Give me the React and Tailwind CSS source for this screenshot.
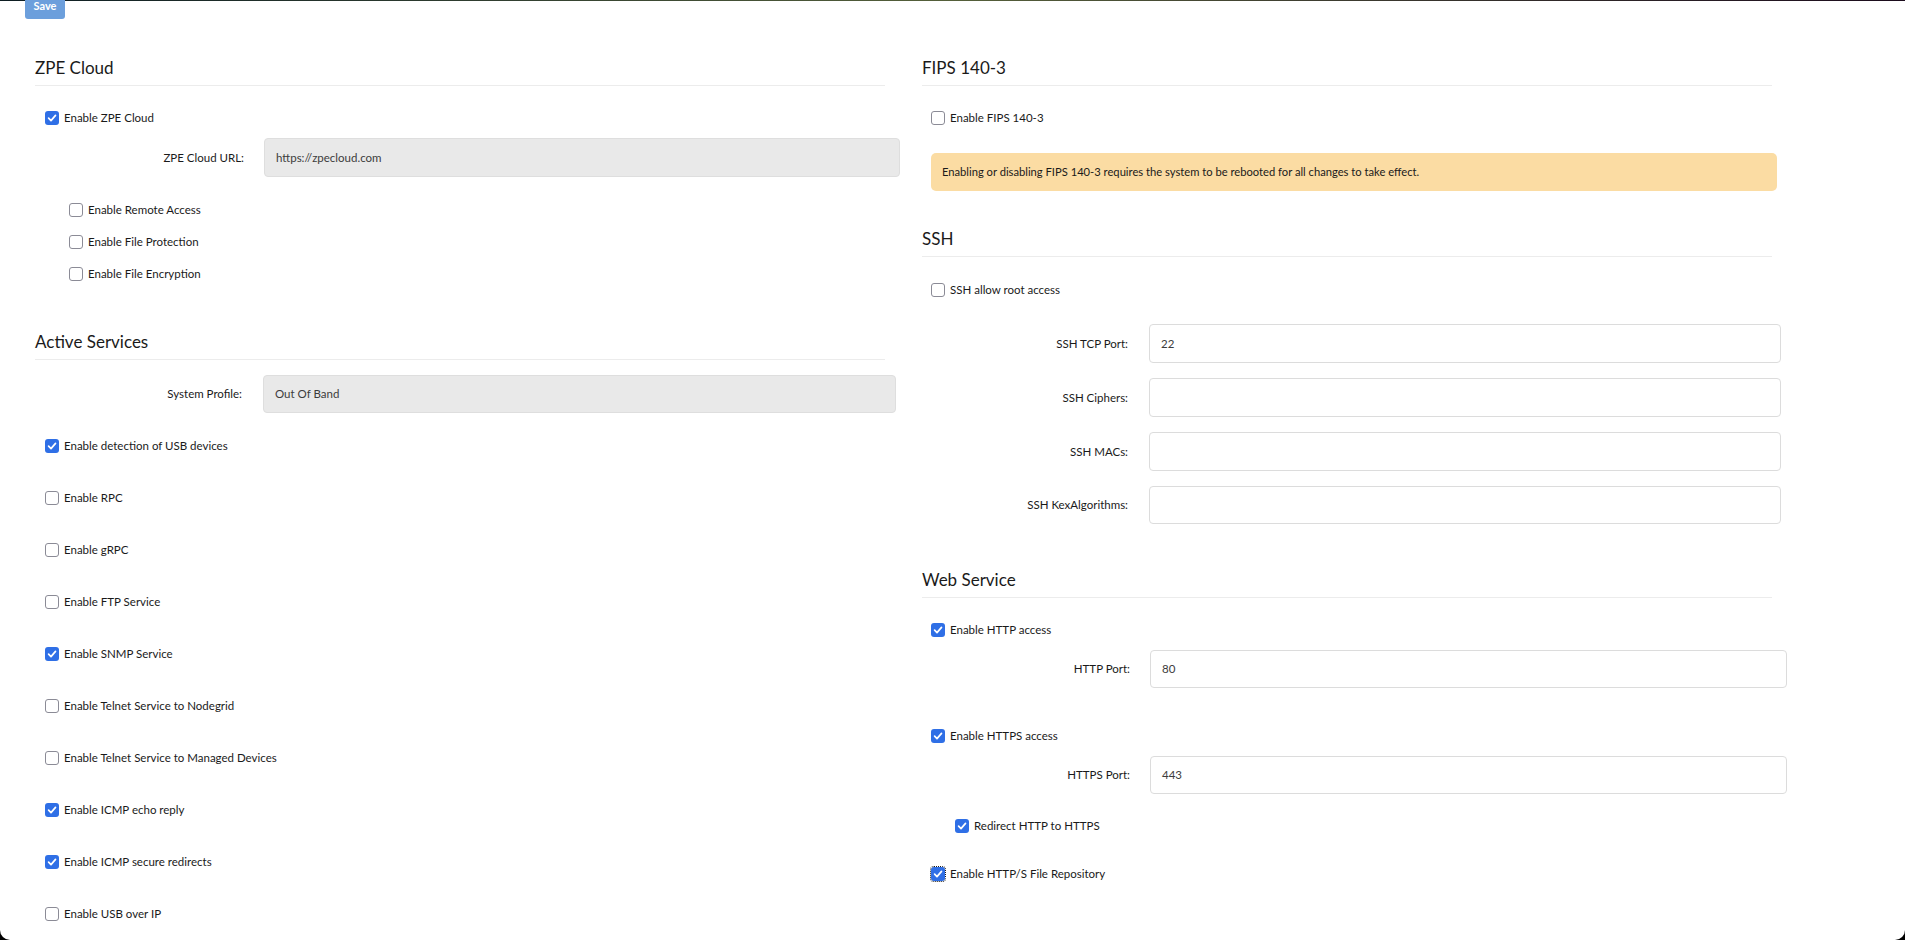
import React from "react";

const FONT = { fontFamily: "Lato, 'Noto Sans', Arial, sans-serif" };

function Check({ checked }) {
  if (checked) {
    return (
      <span className="w-[14px] h-[14px] rounded-[3px] bg-[#2f6fe6] flex items-center justify-center shrink-0">
        <svg width="10" height="10" viewBox="0 0 10 10">
          <path d="M1.6 5.2 L4 7.6 L8.5 2.4" fill="none" stroke="white" strokeWidth="1.7" strokeLinecap="round" strokeLinejoin="round" />
        </svg>
      </span>
    );
  }
  return <span className="w-[14px] h-[14px] rounded-[3px] border-[1.5px] border-[#8b8b96] bg-white shrink-0" />;
}

function CheckRow({ checked, label, className = "" }) {
  return (
    <div className={"h-[20px] flex items-center gap-[5px] " + className}>
      <Check checked={checked} />
      <span className="text-[11.5px] text-[#1a1a1a]">{label}</span>
    </div>
  );
}

function Heading({ children, className = "" }) {
  return (
    <div className={"h-[30px] border-b border-[#ececec] " + className}>
      <div className="h-[24px] leading-[24px] text-[17px] text-[#1a1a1a]">{children}</div>
    </div>
  );
}

function Field({ label, value, disabled, labelW, gap, inputW, h = 39, className = "" }) {
  return (
    <div className={"flex items-center " + className}>
      <div className="text-right text-[11.5px] text-[#1a1a1a] shrink-0" style={{ width: labelW }}>{label}</div>
      <div
        className={
          "rounded-[4px] border flex items-center pl-[11px] text-[11.5px] text-[#3c3c3c] shrink-0 " +
          (disabled ? "bg-[#e9e9e9] border-[#dedede]" : "bg-white border-[#dcdcdc]")
        }
        style={{ marginLeft: gap, width: inputW, height: h }}
      >
        {value}
      </div>
    </div>
  );
}

export default function App() {
  const services = [
    [true, "Enable detection of USB devices"],
    [false, "Enable RPC"],
    [false, "Enable gRPC"],
    [false, "Enable FTP Service"],
    [true, "Enable SNMP Service"],
    [false, "Enable Telnet Service to Nodegrid"],
    [false, "Enable Telnet Service to Managed Devices"],
    [true, "Enable ICMP echo reply"],
    [true, "Enable ICMP secure redirects"],
    [false, "Enable USB over IP"],
  ];
  return (
    <div className="w-full h-[940px] bg-black overflow-hidden" style={FONT}>
      <div className="w-full h-[940px] bg-white rounded-b-[10px] overflow-hidden">
        <div className="h-[1px] w-full bg-linear-to-r from-[#0d1d22] via-[#55603a] to-[#1b0b1c]" />
        <div className="pl-[25px] -mt-[9px]">
          <div className="w-[40px] h-[27px] rounded-[3px] bg-[#6c9fdc] text-white text-[11px] font-bold flex items-start justify-center pt-[8px] leading-[11px]">
            Save
          </div>
        </div>
        <div className="flex pl-[35px] gap-[37px] mt-[37px]">
          {/* Left column */}
          <div className="w-[850px] flex flex-col">
            <Heading>ZPE Cloud</Heading>
            <CheckRow checked label="Enable ZPE Cloud" className="ml-[10px] mt-[22px]" />
            <Field label="ZPE Cloud URL:" value="https://zpecloud.com" disabled labelW={209} gap={20} inputW={636} className="mt-[10px]" />
            <div className="flex flex-col gap-[12px] mt-[23px] ml-[34px]">
              <CheckRow label="Enable Remote Access" />
              <CheckRow label="Enable File Protection" />
              <CheckRow label="Enable File Encryption" />
            </div>
            <Heading className="mt-[46px]">Active Services</Heading>
            <Field label="System Profile:" value="Out Of Band" disabled labelW={207} gap={21} inputW={633} h={38} className="mt-[15px]" />
            <div className="flex flex-col gap-[32px] mt-[23px] ml-[10px]">
              {services.map(([c, l]) => (
                <CheckRow key={l} checked={c} label={l} />
              ))}
            </div>
          </div>
          {/* Right column */}
          <div className="w-[850px] flex flex-col">
            <Heading>FIPS 140-3</Heading>
            <CheckRow label="Enable FIPS 140-3" className="ml-[9px] mt-[22px]" />
            <div className="ml-[9px] mt-[25px] w-[846px] h-[38px] rounded-[5px] bg-[#fbdca3] flex items-center pl-[11px] text-[11.2px] text-[#1a1a1a]">
              Enabling or disabling FIPS 140-3 requires the system to be rebooted for all changes to take effect.
            </div>
            <Heading className="mt-[36px]">SSH</Heading>
            <CheckRow label="SSH allow root access" className="ml-[9px] mt-[23px]" />
            <div className="flex flex-col gap-[15px] mt-[24px]">
              <Field label="SSH TCP Port:" value="22" labelW={206} gap={21} inputW={632} />
              <Field label="SSH Ciphers:" value="" labelW={206} gap={21} inputW={632} />
              <Field label="SSH MACs:" value="" labelW={206} gap={21} inputW={632} />
              <Field label="SSH KexAlgorithms:" value="" labelW={206} gap={21} inputW={632} h={38} />
            </div>
            <Heading className="mt-[44px]">Web Service</Heading>
            <CheckRow checked label="Enable HTTP access" className="ml-[9px] mt-[22px]" />
            <Field label="HTTP Port:" value="80" labelW={208} gap={20} inputW={637} h={38} className="mt-[10px]" />
            <CheckRow checked label="Enable HTTPS access" className="ml-[9px] mt-[38px]" />
            <Field label="HTTPS Port:" value="443" labelW={208} gap={20} inputW={637} h={38} className="mt-[10px]" />
            <CheckRow checked label="Redirect HTTP to HTTPS" className="ml-[33px] mt-[22px]" />
            <div className="ml-[9px] mt-[28px] h-[20px] flex items-center gap-[5px]">
              <span className="outline-1 outline-dotted outline-[#1c1c1c] rounded-[3px]">
                <Check checked />
              </span>
              <span className="text-[11.5px] text-[#1a1a1a]">Enable HTTP/S File Repository</span>
            </div>
          </div>
        </div>
      </div>
    </div>
  );
}
